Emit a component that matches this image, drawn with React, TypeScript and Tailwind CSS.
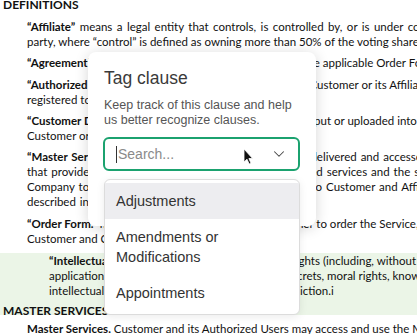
import { ChevronDown } from 'lucide-react'

const docFont = { fontFamily: 'Lato, "Open Sans", sans-serif' }
const uiFont = { fontFamily: '"Liberation Sans", Arial, sans-serif' }

function Line({ children }: { children: React.ReactNode }) {
  return <div className="whitespace-nowrap">{children}</div>
}

function Term({ children }: { children: React.ReactNode }) {
  return <span className="font-bold">{children}</span>
}

const options = ['Adjustments', 'Amendments or Modifications', 'Appointments']

function TagClausePopover() {
  return (
    <div
      className="absolute left-[88px] top-[52px] w-[228px] h-[174px] bg-white rounded-lg shadow-[0_2px_14px_rgba(0,0,0,0.16)] px-4 pt-[15px]"
      style={uiFont}
    >
      <h2 className="text-[17.5px] leading-[22px] text-[#3a3a3a]">Tag clause</h2>
      <p className="mt-[9px] text-[12.5px] leading-[15px] text-[#555]">
        Keep track of this clause and help us better recognize clauses.
      </p>
      <div className="relative mt-[9px] -ml-px w-[197px]">
        <div className="flex items-center h-[34px] rounded-md border-2 border-[#1ba26f] pl-[11px] pr-[10px]">
          <span className="w-px h-[17px] bg-[#333]" />
          <span className="ml-px flex-1 text-[14px] text-[#8a8a8a]">Search...</span>
          <svg className="absolute left-[140px] top-[11px]" width="11" height="17" viewBox="0 0 11 17">
            <path d="M1 1 L1 14 L4 11.2 L6.2 16 L8 15.2 L5.9 10.5 L9.6 10.5 Z" fill="#111" stroke="#fff" strokeWidth="0.8" />
          </svg>
          <ChevronDown className="w-[18px] h-[18px] text-[#444]" strokeWidth={1.4} />
        </div>
        <ul className="absolute left-[1px] top-[42px] w-[196px] bg-white rounded-md border border-[#dcdcdc] shadow-[0_2px_8px_rgba(0,0,0,0.08)] py-[3px]">
          {options.map((opt, i) => (
            <li
              key={opt}
              className={`px-[11px] py-2 text-[14.5px] leading-5 text-[#333] ${i === 0 ? 'bg-[#ededf0]' : ''}`}
            >
              {opt}
            </li>
          ))}
        </ul>
      </div>
    </div>
  )
}

export default function App() {
  return (
    <div className="relative w-[417px] h-[334px] overflow-hidden bg-white text-[11.5px] leading-[15px] text-[#111]" style={docFont}>
      <div className="-mt-[3px]">
        <div className="pl-[3px] font-bold text-[12px]">DEFINITIONS</div>

        <div className="pl-[27px] mt-[6.5px]">
          <div className="whitespace-nowrap [word-spacing:1.5px]"><Term>“Affiliate”</Term> means a legal entity that controls, is controlled by, or is under common control with a</div>
          <Line>party, where “control” is defined as owning more than 50% of the voting shares or interests</Line>
        </div>

        <div className="pl-[27px] mt-[6.5px]">
          <Line><Term>“Agreement”</Term> means these Master Terms together with the applicable Order Form</Line>
        </div>

        <div className="pl-[27px] mt-[7px]">
          <Line><Term>“Authorized Users”</Term> means individuals authorized by the Customer or its Affiliates to use</Line>
          <Line>registered to use the Service.</Line>
        </div>

        <div className="pl-[27px] mt-[6px]">
          <Line><Term>“Customer Data”</Term> means all data, text, content and files input or uploaded into the Service by</Line>
          <Line>Customer or its Authorized Users.</Line>
        </div>

        <div className="pl-[27px] mt-[6px] [word-spacing:1px]">
          <Line><Term>“Master Services”</Term> means the software-as-service tools delivered and accessed online</Line>
          <Line>that provide functionality as described, along with related services and the support</Line>
          <Line>Company to make the Master Services available online to Customer and Affiliates</Line>
          <Line>described in the Order Form.</Line>
        </div>

        <div className="pl-[27px] mt-[7px]">
          <Line><Term>“Order Form.”</Term> means an ordering form used by Customer to order the Service,</Line>
          <Line>Customer and Company.</Line>
        </div>

        <div className="mt-[7px] bg-[#ebf5e7] h-[62px]">
          <div className="pl-[49px]">
            <Line><Term>“Intellectual Property Rights”</Term> means worldwide rights (including, without</Line>
            <Line>applications, copyrights, trademarks, and trade secrets, moral rights, know-how</Line>
            <Line>intellectual property rights in any country or jurisdiction.i</Line>
          </div>
          <div className="pl-[3px] mt-[5px] font-bold text-[12px]">MASTER SERVICES</div>
        </div>

        <div className="pl-[27px] mt-[6px]">
          <Line><Term>Master Services.</Term> Customer and its Authorized Users may access and use the Master</Line>
        </div>
      </div>

      <TagClausePopover />
    </div>
  )
}
